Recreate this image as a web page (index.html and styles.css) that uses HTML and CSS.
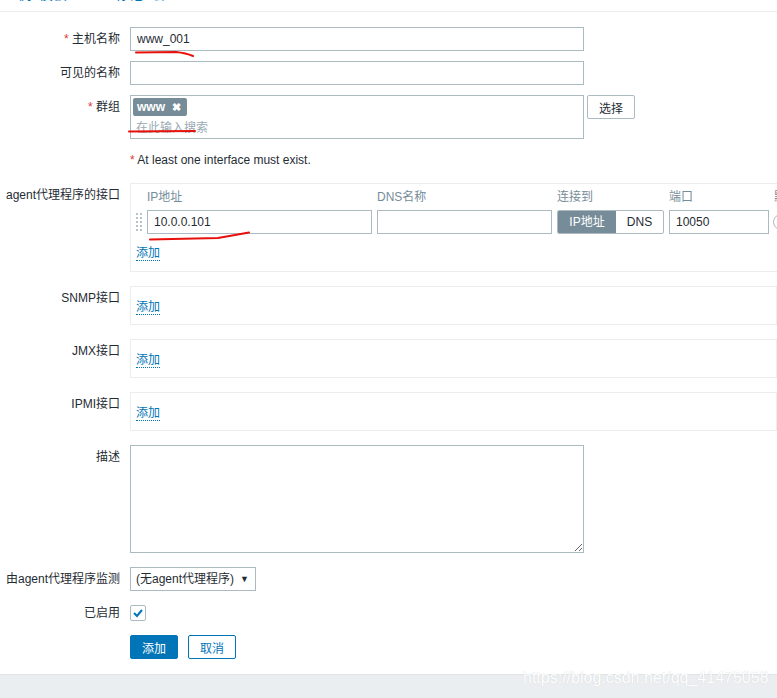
FILE: index.html
```html
<!DOCTYPE html>
<html lang="zh-CN">
<head>
    <meta charset="UTF-8">
    <title>主机</title>
    <link rel="stylesheet" href="styles.css">
</head>
<body>
    <!-- cut-off tab bar -->
    <div class="tabs"><span class="tab-txt">主机&nbsp;&nbsp;模板&nbsp;&nbsp;&nbsp;IPMI&nbsp;&nbsp;标记&nbsp;&nbsp;宏</span></div>

    <div class="form">
        <div class="row">
            <div class="lbl"><span class="req">*</span> 主机名称</div>
            <input class="text wide" type="text" value="www_001">
        </div>
        <div class="row">
            <div class="lbl">可见的名称</div>
            <input class="text wide" type="text" value="">
        </div>
        <div class="row row-group">
            <div class="lbl"><span class="req">*</span> 群组</div>
            <div class="multi">
                <span class="tag">www <b class="tag-x">&#x2716;</b></span>
                <div class="ph">在此输入搜索</div>
            </div>
            <button class="btn-grey">选择</button>
        </div>
        <div class="row row-note">
            <div class="lbl"></div>
            <div class="note"><span class="req">*</span> At least one interface must exist.</div>
        </div>

        <div class="row row-box">
            <div class="lbl">agent代理程序的接口</div>
            <div class="iface iface-agent">
                <div class="if-grid">
                    <span></span>
                    <span class="if-head">IP地址</span>
                    <span class="if-head">DNS名称</span>
                    <span class="if-head">连接到</span>
                    <span class="if-head">端口</span>
                    <span class="if-head">默认</span>

                    <svg class="handle" width="6" height="18" viewBox="0 0 6 18">
                        <g fill="#b8c4ca">
                            <rect x="0" y="0" width="2" height="2"/><rect x="4" y="0" width="2" height="2"/>
                            <rect x="0" y="4" width="2" height="2"/><rect x="4" y="4" width="2" height="2"/>
                            <rect x="0" y="8" width="2" height="2"/><rect x="4" y="8" width="2" height="2"/>
                            <rect x="0" y="12" width="2" height="2"/><rect x="4" y="12" width="2" height="2"/>
                            <rect x="0" y="16" width="2" height="2"/><rect x="4" y="16" width="2" height="2"/>
                        </g>
                    </svg>
                    <input class="text" type="text" value="10.0.0.101">
                    <input class="text" type="text" value="">
                    <div class="toggle"><span class="on">IP地址</span><span>DNS</span></div>
                    <input class="text" type="text" value="10050">
                    <span class="radio"></span>
                </div>
                <a class="add" href="#">添加</a>
            </div>
        </div>
        <div class="row row-box">
            <div class="lbl">SNMP接口</div>
            <div class="iface"><a class="add" href="#">添加</a></div>
        </div>
        <div class="row row-box">
            <div class="lbl">JMX接口</div>
            <div class="iface"><a class="add" href="#">添加</a></div>
        </div>
        <div class="row row-box">
            <div class="lbl">IPMI接口</div>
            <div class="iface"><a class="add" href="#">添加</a></div>
        </div>
        <div class="row row-box">
            <div class="lbl">描述</div>
            <textarea class="desc"></textarea>
        </div>
        <div class="row row-box">
            <div class="lbl">由agent代理程序监测</div>
            <div class="select">(无agent代理程序) <span class="arrow">&#9660;</span></div>
        </div>
        <div class="row row-check">
            <div class="lbl">已启用</div>
            <span class="check">
                <svg width="12" height="10" viewBox="0 0 12 10"><path d="M2 5 L5 8 L10 2" fill="none" stroke="#0275b8" stroke-width="2"/></svg>
            </span>
        </div>
        <div class="row row-btns">
            <div class="lbl"></div>
            <button class="btn-main">添加</button>
            <button class="btn-alt">取消</button>
        </div>
    </div>

    <div class="footer"></div>
    <div class="watermark">https://blog.csdn.net/qq_41475058</div>

    <!-- red pen marks drawn over the screenshot -->
    <svg class="marks" width="777" height="698">
        <g fill="none" stroke="#e8100c" stroke-width="2" stroke-linecap="round">
            <path d="M136 52.5 L176 52 Q186 53 193 56"/>
            <path d="M129 131.5 L195 131"/>
            <path d="M150 239.5 L218 238 L235 235 L249 232.5"/>
        </g>
    </svg>
</body>
</html>
```

FILE: styles.css
```css
html, body { margin: 0; overflow: hidden; background: #fff; }
body { font-family: "Liberation Sans", Arial, "Noto Sans CJK SC", sans-serif; font-size: 12px; color: #1f2c33; width: 777px; height: 698px; position: relative; }

.tabs { height: 11px; overflow: hidden; border-bottom: 1px solid #ebeef0; }
.tab-txt { display: block; margin-top: -14px; padding-left: 3px; color: #0275b8; font-size: 14px; line-height: 16px; }

.form { padding-top: 15px; }
.row { display: flex; align-items: flex-start; margin-bottom: 10px; }
.lbl { width: 120px; flex: none; margin-right: 10px; text-align: right; line-height: 24px; white-space: nowrap; }
.req { color: #e33734; }

input.text { box-sizing: border-box; height: 24px; border: 1px solid #acbbc2; padding: 0 6px; font: 12px "Liberation Sans", Arial, "Noto Sans CJK SC", sans-serif; color: #1f2c33; background: #fff; outline: none; margin: 0; }
input.wide { width: 454px; }

.row-group { margin-bottom: 9px; }
.multi { box-sizing: border-box; width: 454px; height: 44px; border: 1px solid #acbbc2; padding: 2px; }
.tag { display: inline-block; height: 18px; line-height: 18px; padding: 0 6px 0 4px; background: #768d99; color: #fff; font-weight: bold; border-radius: 2px; }
.tag-x { font-size: 11px; margin-left: 4px; }
.ph { color: #9aaab3; line-height: 20px; padding: 2px 0 0 3px; }
.btn-grey { box-sizing: border-box; width: 48px; height: 24px; margin-left: 3px; border: 1px solid #acbbc2; border-radius: 2px; background: #fff; font: 12px "Liberation Sans", Arial, "Noto Sans CJK SC", sans-serif; color: #1f2c33; padding: 0; }

.row-note { margin-bottom: 11px; }
.note { line-height: 24px; }

.row-box { margin-bottom: 14px; }
.iface { box-sizing: border-box; width: 680px; height: 39px; border: 1px solid #ebeef0; padding: 13px 0 0 5px; }
.iface-agent { height: 89px; padding-top: 4px; }
.if-grid { display: grid; grid-template-columns: 6px 225px 175px 107px 100px 30px; column-gap: 5px; row-gap: 4px; align-items: center; }
.if-grid .radio { margin-left: -1px; }
.if-head { color: #768d99; line-height: 18px; }
.handle { display: block; }
.toggle { display: flex; box-sizing: border-box; height: 24px; border: 1px solid #acbbc2; border-radius: 2px; overflow: hidden; }
.toggle span { flex: 1; text-align: center; line-height: 22px; }
.toggle .on { flex: none; width: 58px; background: #768d99; color: #fff; }
.radio { display: block; width: 14px; height: 14px; border: 1px solid #acbbc2; border-radius: 50%; }
.add { display: inline-block; line-height: 14px; color: #0275b8; text-decoration: none; border-bottom: 1px dotted #0275b8; }
.iface-agent .add { margin-top: 12px; }

.desc { box-sizing: border-box; width: 454px; height: 108px; border: 1px solid #acbbc2; margin: 0; padding: 4px 6px; font: 12px "Liberation Sans", Arial, "Noto Sans CJK SC", sans-serif; }

.select { box-sizing: border-box; width: 126px; height: 24px; line-height: 22px; border: 1px solid #acbbc2; padding-left: 5px; position: relative; }
.arrow { position: absolute; right: 6px; top: 0; font-size: 9px; color: #1f2c33; }

.row-check { margin-bottom: 14px; }
.row-check .lbl { line-height: 16px; }
.check { box-sizing: border-box; width: 16px; height: 16px; border: 1px solid #acbbc2; border-radius: 2px; display: flex; align-items: center; justify-content: center; }

.row-btns { margin-bottom: 15px; }
.btn-main, .btn-alt { box-sizing: border-box; width: 48px; height: 24px; border-radius: 2px; font: 12px "Liberation Sans", Arial, "Noto Sans CJK SC", sans-serif; padding: 0; }
.btn-main { background: #0275b8; border: 1px solid #0275b8; color: #fff; }
.btn-alt { background: #fff; border: 1px solid #0275b8; color: #0275b8; margin-left: 10px; }

.footer { height: 30px; background: #ebeef0; border-top: 1px solid #dfe4e7; }
.watermark { position: absolute; left: 523px; top: 669px; font-size: 16px; line-height: 18px; color: #fff; text-shadow: 0 0 1px #c8cdd0; }
.marks { position: absolute; left: 0; top: 0; pointer-events: none; }
```
